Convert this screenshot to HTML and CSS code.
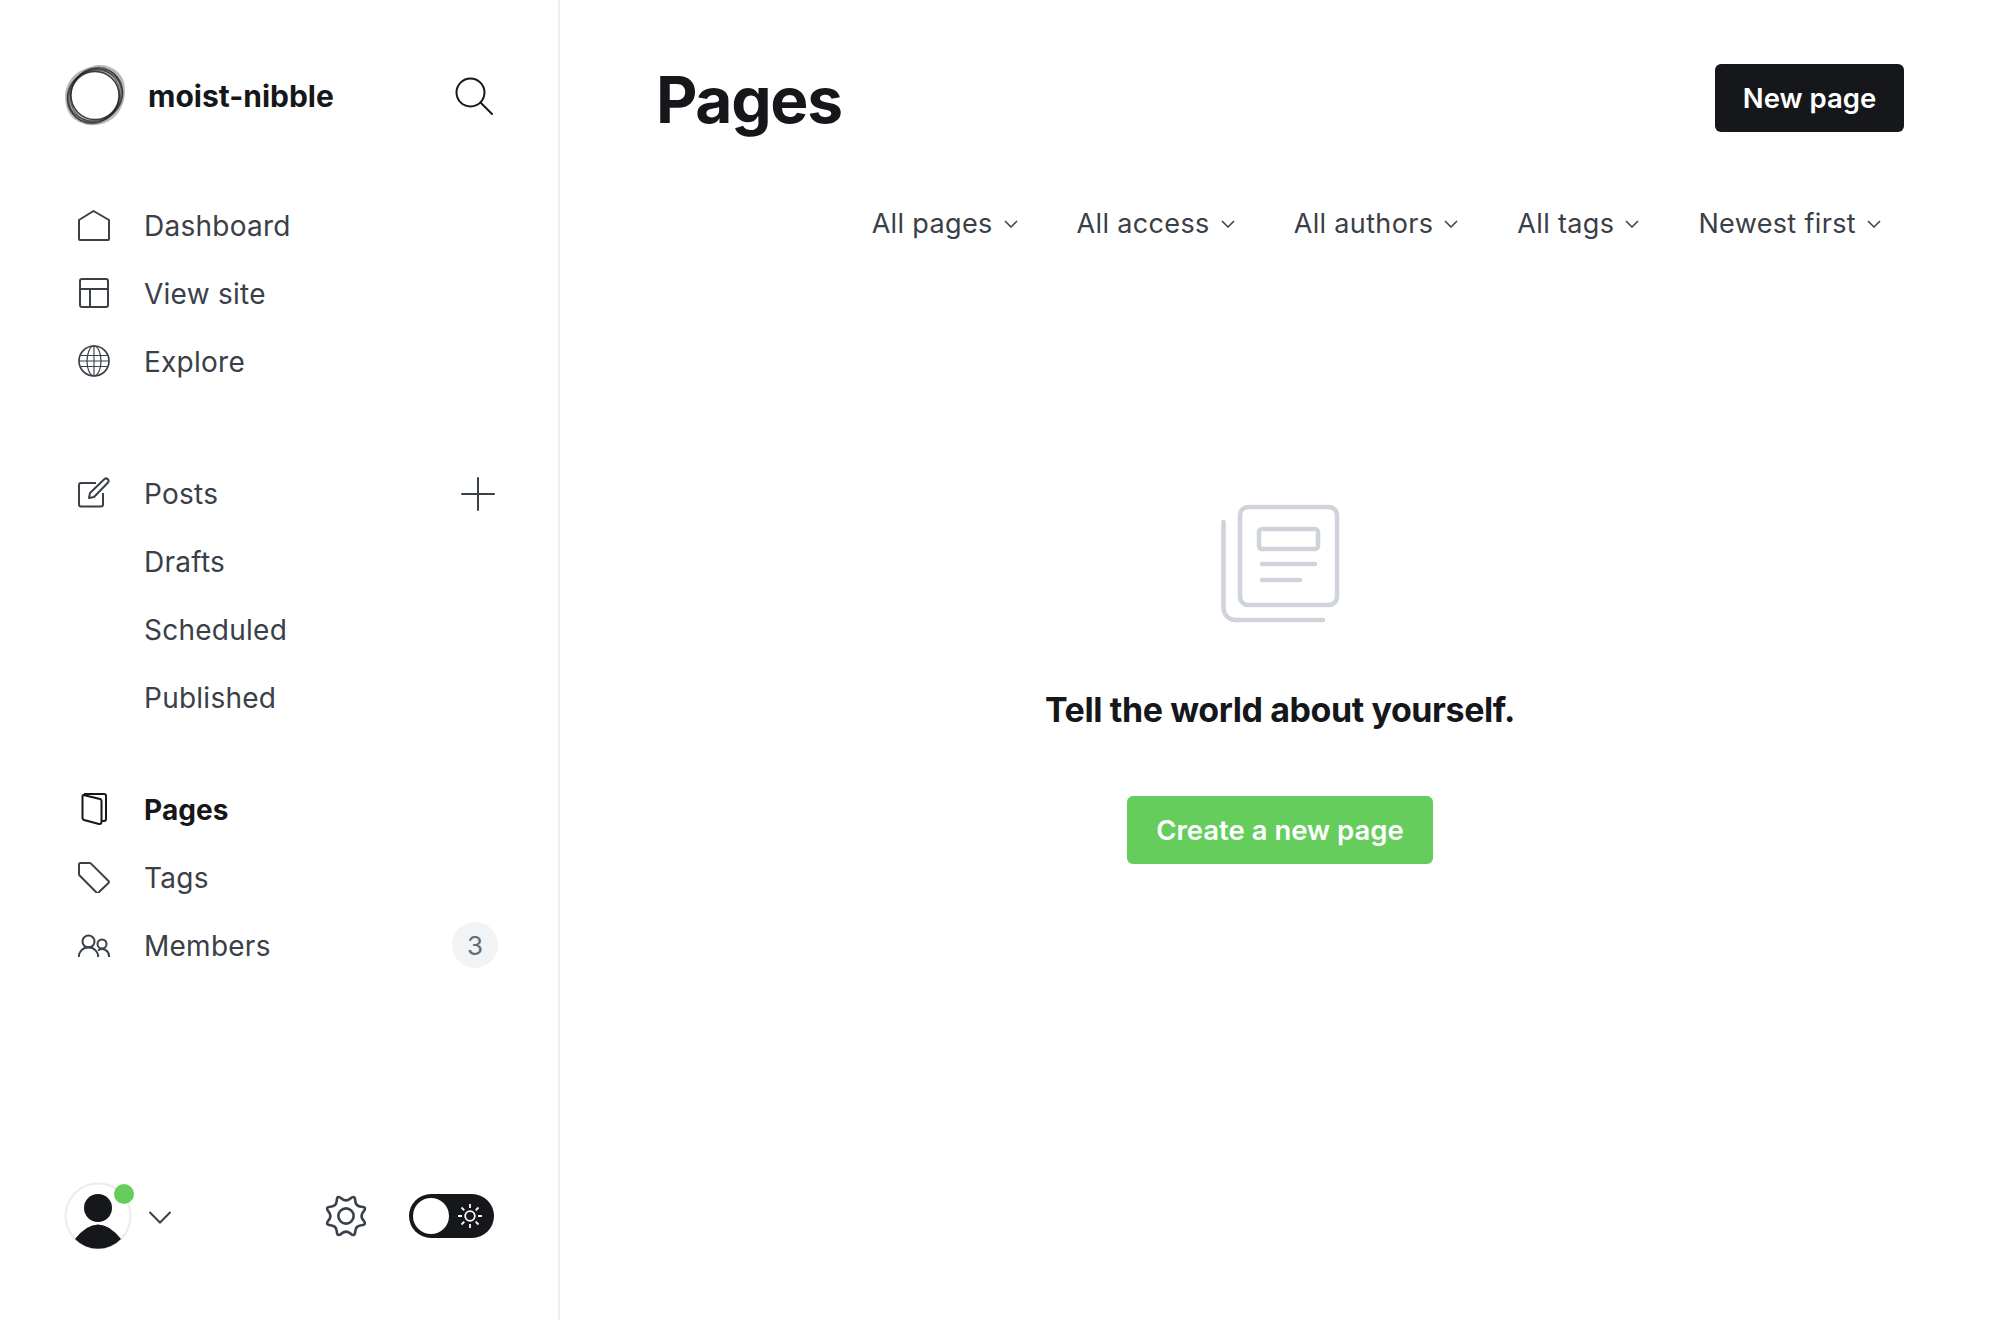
FILE: index.html
```html
<!DOCTYPE html>
<html lang="en">
<head>
  <meta charset="UTF-8">
  <title>Pages</title>
  <link rel="stylesheet" href="styles.css">
</head>
<body>
  <aside class="sidebar">
    <div class="site-row">
      <svg class="site-logo" width="62" height="62" viewBox="0 0 62 62" fill="none" stroke="#15171a">
        <path fill-rule="evenodd" d="M31 .5 C44 -2 57 6 60 17 C63 30 59 46 48 54 C36 63 18 62 8 52 C-1 42 -1 24 7 14 C13 6 22 3 31 .5Z M31 6.500 A24 24 0 1 0 31.010 54.500 A24 24 0 1 0 31 6.500Z" fill="#15171a" fill-opacity=".3" stroke="none"/>
        <ellipse cx="31" cy="30.500" rx="29" ry="25" transform="rotate(-40 31 30.500)" stroke-width="1.300" stroke-opacity=".6"/>
        <ellipse cx="31" cy="30.500" rx="29" ry="25" transform="rotate(-60 31 30.500)" stroke-width="1.300" stroke-opacity=".55"/>
        <ellipse cx="31" cy="30.500" rx="28" ry="25" transform="rotate(-20 31 30.500)" stroke-width="1.300" stroke-opacity=".55"/>
        <ellipse cx="31" cy="30.500" rx="27" ry="24.500" transform="rotate(-75 31 30.500)" stroke-width="1.300" stroke-opacity=".5"/>
        <circle cx="31" cy="30.500" r="24" stroke-width="1.500" stroke-opacity=".8"/>
      </svg>
      <span class="site-name">moist-nibble</span>
      <svg class="search-icon" width="38" height="38" viewBox="0 0 38 38" fill="none" stroke="#15171a" stroke-width="2" stroke-linecap="round">
        <circle cx="15.500" cy="15.500" r="14"/>
        <path d="M26 26 L37 37"/>
      </svg>
    </div>

    <nav class="nav-group nav-first">
      <a class="nav-item">
        <svg class="nav-icon" viewBox="0 0 32 32"><path d="M1 11 L15.500 2 L31 11 V30 a1 1 0 0 1 -1 1 H2 a1 1 0 0 1 -1 -1Z"/></svg>
        Dashboard
      </a>
      <a class="nav-item">
        <svg class="nav-icon" viewBox="0 0 32 32"><rect x="2" y="2" width="28" height="28" rx="2"/><path d="M2 12 H30 M12 12 V30"/></svg>
        View site
      </a>
      <a class="nav-item">
        <svg class="nav-icon" viewBox="0 0 32 32"><circle cx="16" cy="16" r="15" stroke-width="1.700"/><ellipse cx="16" cy="16" rx="7" ry="15" stroke-width="1.200"/><path d="M16 1 V31 M2.500 10.500 H29.500 M1 16 H31 M2.500 21.500 H29.500" stroke-width="1.100"/></svg>
        Explore
      </a>
    </nav>

    <nav class="nav-group nav-posts">
      <a class="nav-item">
        <svg class="nav-icon" viewBox="0 0 32 32"><path d="M18 6 H3 a2 2 0 0 0 -2 2 V27.500 a2 2 0 0 0 2 2 H23 a2 2 0 0 0 2 -2 V16"/><path d="M11 21 L12 16 L26.500 2 a2.500 2.500 0 0 1 3.500 3.500 L16 20Z"/></svg>
        Posts
        <svg class="add-icon" width="34" height="34" viewBox="0 0 34 34"><path d="M17 1 V33 M1 17 H33"/></svg>
      </a>
      <a class="nav-item nav-sub">Drafts</a>
      <a class="nav-item nav-sub">Scheduled</a>
      <a class="nav-item nav-sub">Published</a>
    </nav>

    <nav class="nav-group nav-pages">
      <a class="nav-item active">
        <svg class="nav-icon" viewBox="0 0 32 32"><path d="M6 1 H26 a2 2 0 0 1 2 2 V26 a2 2 0 0 1 -2 2 H24"/><path d="M5.500 2 L22 6 a2 2 0 0 1 1.500 2 V29 a2 2 0 0 1 -2.500 2 L6 27 a2 2 0 0 1 -1.500 -2 V3 a1 1 0 0 1 1 -1Z"/></svg>
        Pages
      </a>
      <a class="nav-item">
        <svg class="nav-icon" viewBox="0 0 32 32"><path d="M2.500 2 H11.500 a2 2 0 0 1 1.500 .6 L30.500 20 a1.500 1.500 0 0 1 0 2 L20.500 31.500 a1.500 1.500 0 0 1 -2 0 L1.600 14.500 a2 2 0 0 1 -.6 -1.500 V3.500 a1.500 1.500 0 0 1 1.500 -1.500Z"/></svg>
        Tags
      </a>
      <a class="nav-item">
        <svg class="nav-icon" viewBox="0 0 32 32"><circle cx="10.500" cy="12.500" r="6"/><path d="M.8 28 a9.700 9.700 0 0 1 19.400 0"/><circle cx="24" cy="15" r="4.500"/><path d="M20 21.500 a7 7 0 0 1 11 6.500"/></svg>
        Members
        <span class="count-badge">3</span>
      </a>
    </nav>

    <div class="sidebar-footer">
      <div class="user-menu">
        <span class="avatar">
          <svg width="68" height="68" viewBox="0 0 68 68">
            <circle cx="34" cy="34" r="32.500" fill="#fff" stroke="#ececec" stroke-width="2"/>
            <circle cx="34" cy="26" r="14" fill="#15171a"/>
            <path d="M11 57 Q34 28 57 57 A32 32 0 0 1 11 57Z" fill="#15171a"/>
          </svg>
          <span class="status-dot"></span>
        </span>
        <svg class="user-caret" width="24" height="13" viewBox="0 0 24 13"><path d="M1.500 1 L12 11.500 L22.500 1"/></svg>
      </div>
      <svg class="gear-icon" width="44" height="44" viewBox="-1 -1 42 42">
        <g transform="rotate(22.500 20 20)">
          <path d="M37 17.500 Q42 20 37 22.500 Q32 25 33.800 30.300 Q35.600 35.600 30.300 33.800 Q25 32 22.500 37 Q20 42 17.500 37 Q15 32 9.700 33.800 Q4.400 35.600 6.200 30.300 Q8 25 3 22.500 Q-2 20 3 17.500 Q8 15 6.200 9.700 Q4.400 4.400 9.700 6.200 Q15 8 17.500 3 Q20 -2 22.500 3 Q25 8 30.300 6.200 Q35.600 4.400 33.800 9.700 Q32 15 37 17.500Z"/>
        </g>
        <circle cx="20" cy="20" r="7.300"/>
      </svg>
      <div class="theme-toggle">
        <span class="toggle-knob"></span>
        <svg class="sun-icon" width="24" height="24" viewBox="0 0 24 24">
          <circle cx="12" cy="12" r="4.800"/>
          <path d="M12 0 V4 M12 20 V24 M0 12 H4 M20 12 H24 M3.500 3.500 L6.300 6.300 M17.700 17.700 L20.500 20.500 M3.500 20.500 L6.300 17.700 M17.700 6.300 L20.500 3.500"/>
        </svg>
      </div>
    </div>
  </aside>

  <main class="content">
    <header class="page-header">
      <h1 class="page-title">Pages</h1>
      <button class="btn-dark">New page</button>
    </header>

    <div class="filters">
      <span class="filter">All pages<svg class="filter-caret" viewBox="0 0 14 8"><path d="M1 1 L7 7 L13 1"/></svg></span>
      <span class="filter">All access<svg class="filter-caret" viewBox="0 0 14 8"><path d="M1 1 L7 7 L13 1"/></svg></span>
      <span class="filter">All authors<svg class="filter-caret" viewBox="0 0 14 8"><path d="M1 1 L7 7 L13 1"/></svg></span>
      <span class="filter">All tags<svg class="filter-caret" viewBox="0 0 14 8"><path d="M1 1 L7 7 L13 1"/></svg></span>
      <span class="filter">Newest first<svg class="filter-caret" viewBox="0 0 14 8"><path d="M1 1 L7 7 L13 1"/></svg></span>
    </div>

    <section class="empty">
      <svg class="empty-icon" width="120" height="120" viewBox="0 0 120 120">
        <rect x="19" y="3" width="97" height="98" rx="8"/>
        <rect x="38" y="25" width="59" height="20" rx="3"/>
        <path d="M41 60 H94 M41 76 H79"/>
        <path d="M2.500 18 V104 a12 12 0 0 0 12 12 H102"/>
      </svg>
      <h2 class="empty-title">Tell the world about yourself.</h2>
      <button class="btn-green">Create a new page</button>
    </section>
  </main>
</body>
</html>
```

FILE: styles.css
```css
* {
  box-sizing: border-box;
}
html, body {
  margin: 0;
  height: 100%;
}
body {
  display: flex;
  height: 1320px;
  background: #fff;
  color: #15171a;
  font-family: Inter, "Liberation Sans", sans-serif;
  overflow: hidden;
}

/* sidebar */
.sidebar {
  width: 560px;
  flex-shrink: 0;
  display: flex;
  flex-direction: column;
  padding: 62px 61px 0 64px;
  border-right: 2px solid #eceef0;
}
.site-row {
  display: flex;
  align-items: center;
  height: 68px;
}
.site-name {
  margin-left: 22px;
  font-size: 30px;
  font-weight: 700;
}
.search-icon {
  margin-left: auto;
  margin-right: 4px;
}
.nav-group {
  display: flex;
  flex-direction: column;
}
.nav-first {
  margin-top: 61px;
}
.nav-posts {
  margin-top: 64px;
}
.nav-pages {
  margin-top: 44px;
}
.nav-item {
  display: flex;
  align-items: center;
  height: 68px;
  padding: 2px 0 0 14px;
  color: #394047;
  font-size: 28px;
  letter-spacing: .25px;
}
.nav-sub {
  padding-left: 80px;
}
.nav-item.active {
  color: #15171a;
  font-weight: 700;
  letter-spacing: .1px;
}
.nav-icon {
  width: 32px;
  height: 32px;
  margin: 0 34px 2px 0;
  fill: none;
  stroke: #394047;
  stroke-width: 2;
  stroke-linejoin: round;
  flex-shrink: 0;
}
.active .nav-icon {
  stroke: #15171a;
}
.add-icon {
  margin-left: auto;
  margin-right: 2px;
  fill: none;
  stroke: #394047;
  stroke-width: 2;
  stroke-linecap: round;
}
.count-badge {
  margin: 0 -1px 2px auto;
  width: 46px;
  height: 46px;
  border-radius: 50%;
  background: #f1f3f4;
  display: flex;
  align-items: center;
  justify-content: center;
  font-size: 26px;
  letter-spacing: 0;
  color: #626d79;
}
.sidebar-footer {
  margin-top: auto;
  margin-bottom: 70px;
  display: flex;
  align-items: center;
  height: 68px;
}
.user-menu {
  display: flex;
  align-items: center;
}
.avatar {
  position: relative;
  display: block;
  width: 68px;
  height: 68px;
}
.avatar svg {
  display: block;
}
.status-dot {
  position: absolute;
  top: 2px;
  right: -2px;
  width: 20px;
  height: 20px;
  border-radius: 50%;
  background: #65cd5c;
}
.user-caret {
  margin-left: 16px;
  margin-top: 2px;
  fill: none;
  stroke: #394047;
  stroke-width: 2;
}
.gear-icon {
  margin-left: 152px;
  fill: none;
  stroke: #394047;
  stroke-width: 2.500;
}
.theme-toggle {
  margin-left: 41px;
  width: 85px;
  height: 44px;
  border-radius: 22px;
  background: #15171a;
  display: flex;
  align-items: center;
  padding-left: 4px;
}
.toggle-knob {
  width: 36px;
  height: 36px;
  border-radius: 50%;
  background: #fff;
}
.sun-icon {
  margin-left: 9px;
  fill: none;
  stroke: #fff;
  stroke-width: 1.800;
}

/* main column */
.content {
  flex: 1;
  display: flex;
  flex-direction: column;
  padding: 64px 96px 0 96px;
}
.page-header {
  display: flex;
  align-items: center;
  justify-content: space-between;
  height: 68px;
}
.page-title {
  margin: 2px 0 0;
  font-size: 64px;
  font-weight: 700;
  letter-spacing: -1.300px;
}
.btn-dark, .btn-green {
  height: 68px;
  border: 0;
  border-radius: 6px;
  color: #fff;
  font-family: inherit;
  font-size: 27.500px;
  font-weight: 600;
}
.btn-dark {
  width: 189px;
  background: #15171a;
}
.filters {
  margin-top: 71px;
  display: flex;
  justify-content: flex-end;
  gap: 59px;
  padding-right: 23px;
  height: 40px;
  align-items: center;
}
.filter {
  display: flex;
  align-items: center;
  color: #394047;
  font-size: 27px;
  letter-spacing: .35px;
}
.filter-caret {
  width: 14px;
  height: 8px;
  margin-left: 11px;
  margin-top: 2px;
  fill: none;
  stroke: #394047;
  stroke-width: 1.500;
}
.empty {
  margin-top: 261px;
  display: flex;
  flex-direction: column;
  align-items: center;
}
.empty-icon {
  margin-left: 2px;
  fill: none;
  stroke: #ced4d9;
  stroke-width: 4.500;
  stroke-linecap: round;
}
.empty-title {
  margin: 64px 0;
  font-size: 34px;
  line-height: 44px;
  font-weight: 700;
  letter-spacing: -.4px;
}
.btn-green {
  width: 306px;
  background: #65cd5c;
}
```
